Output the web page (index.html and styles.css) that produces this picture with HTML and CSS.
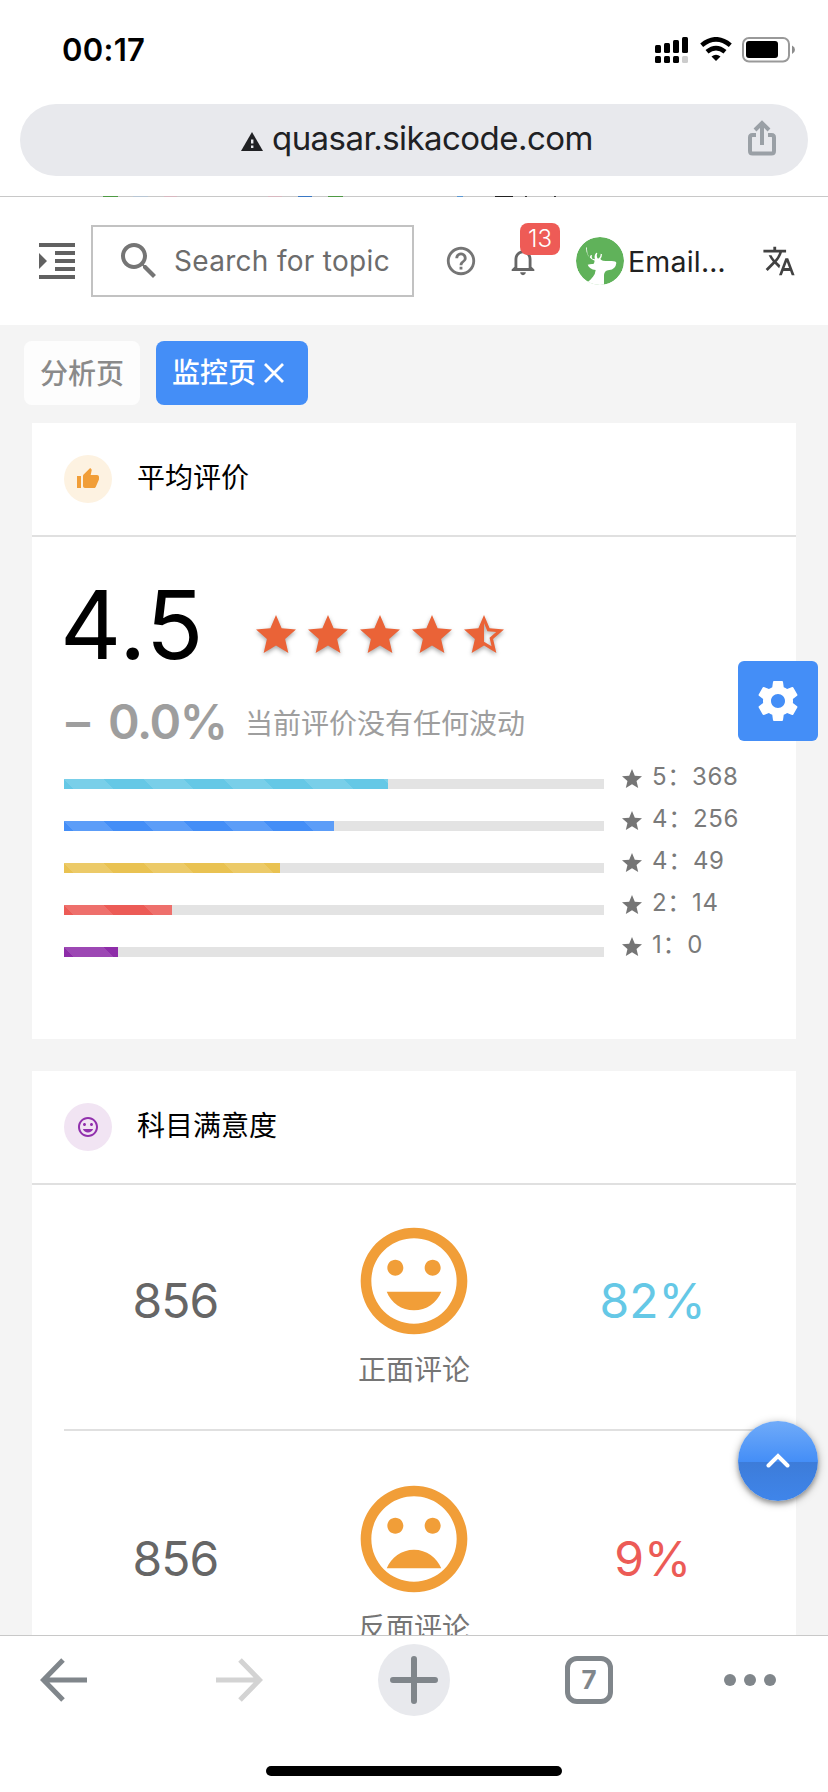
FILE: index.html
```html
<!DOCTYPE html>
<html lang="zh-CN">
<head>
<meta charset="utf-8">
<title>监控页</title>
<link rel="stylesheet" href="styles.css">
</head>
<body>
<svg class="sprite" aria-hidden="true">
  <symbol id="star" viewBox="0 0 24 24"><path d="M12 17.27L18.18 21l-1.64-7.03L22 9.24l-7.19-.61L12 2 9.19 8.63 2 9.24l5.46 4.73L5.82 21z"/></symbol>
  <symbol id="star-half" viewBox="0 0 24 24"><path d="M22 9.24l-7.19-.62L12 2 9.19 8.63 2 9.24l5.46 4.73L5.82 21 12 17.27 18.18 21l-1.63-7.03L22 9.24zM12 15.4V6.1l1.71 4.04 4.38.38-3.32 2.88 1 4.28L12 15.4z"/></symbol>
  <symbol id="mood" viewBox="0 0 24 24"><path d="M11.99 2C6.47 2 2 6.48 2 12s4.47 10 9.99 10C17.52 22 22 17.52 22 12S17.52 2 11.99 2zM12 20c-4.42 0-8-3.58-8-8s3.58-8 8-8 8 3.58 8 8-3.58 8-8 8zm3.5-9c.83 0 1.5-.67 1.5-1.5S16.33 8 15.5 8 14 8.67 14 9.5s.67 1.5 1.5 1.5zm-7 0c.83 0 1.5-.67 1.5-1.5S9.33 8 8.5 8 7 8.67 7 9.5 7.67 11 8.5 11zm3.5 6.5c2.33 0 4.31-1.46 5.11-3.5H6.89c.8 2.04 2.78 3.5 5.11 3.5z"/></symbol>
  <symbol id="mood-bad" viewBox="0 0 24 24"><path d="M11.99 2C6.47 2 2 6.48 2 12s4.47 10 9.99 10C17.52 22 22 17.52 22 12S17.52 2 11.99 2zM12 20c-4.42 0-8-3.58-8-8s3.58-8 8-8 8 3.58 8 8-3.58 8-8 8zm3.5-9c.83 0 1.5-.67 1.5-1.5S16.33 8 15.5 8 14 8.67 14 9.5s.67 1.5 1.5 1.5zm-7 0c.83 0 1.5-.67 1.5-1.5S9.33 8 8.5 8 7 8.67 7 9.5 7.67 11 8.5 11zm3.5 3c-2.33 0-4.31 1.46-5.11 3.5h10.22c-.8-2.04-2.78-3.5-5.11-3.5z"/></symbol>
</svg>

<div class="status">
  <span class="clock">00:17</span>
  <div class="indicators">
    <svg width="34" height="26" viewBox="0 0 34 26"><rect x="0" y="8" width="6" height="8" rx="1.5"/><rect x="9" y="6" width="6" height="10" rx="1.5"/><rect x="18" y="3" width="6" height="13" rx="1.5"/><rect x="27" y="0" width="6" height="16" rx="1.5"/><rect x="0" y="19" width="6" height="7" rx="1.5"/><rect x="9" y="19" width="6" height="7" rx="1.5"/><rect x="18" y="19" width="6" height="7" rx="1.5"/><rect x="27" y="19" width="6" height="7" rx="1.5" fill="#ccc"/></svg>
    <svg class="wifi" width="32" height="25" viewBox="0 0 32 25"><path d="M1.700 8.200Q16-3.600 30.300 8.200" fill="none" stroke="#000" stroke-width="4.600"/><path d="M7 14.800Q16 7.400 25 14.800" fill="none" stroke="#000" stroke-width="4.600"/><path d="M11.500 19.500Q16 15.800 20.500 19.500L16 24z"/></svg>
    <svg class="battery" width="54" height="26" viewBox="0 0 54 26"><rect x="1" y="1" width="46" height="23.500" rx="6" fill="none" stroke="#999" stroke-width="2"/><rect x="4" y="4" width="32" height="17" rx="3"/><path d="M50 8.500q3 1.500 3 4.200t-3 4.200z" fill="#8c8c8c"/></svg>
  </div>
</div>

<div class="address">
  <div class="pill">
    <svg width="22" height="19" viewBox="0 0 22 19"><path fill="#202124" d="M11 0l11 19H0z"/><path fill="#e8e9ed" d="M10 7.500h2.400v4H10zM10 13.500h2.400v2.400H10z"/></svg>
    <span class="url">quasar.sikacode.com</span>
    <svg class="share" width="28" height="36" viewBox="0 0 28 36" fill="none" stroke="#9aa0a6" stroke-width="4"><path d="M8 15H4.500Q2 15 2 17.500V31q0 2.500 2.500 2.500h19Q26 33.500 26 31V17.500Q26 15 23.500 15H20M14 25V3M7 10l7-7 7 7"/></svg>
  </div>
</div>
<div class="edge"></div>

<main class="page">
  <header class="topbar">
    <svg class="menu" viewBox="0 0 24 24"><path d="M3 21h18v-2H3v2zM3 8v8l4-4-4-4zm8 9h10v-2H11v2zM3 3v2h18V3H3zm8 6h10V7H11v2zm0 4h10v-2H11v2z"/></svg>
    <div class="search">
      <svg viewBox="0 0 24 24"><path d="M15.500 14h-.790l-.280-.270C15.410 12.590 16 11.110 16 9.500 16 5.910 13.090 3 9.500 3S3 5.910 3 9.500 5.910 16 9.500 16c1.610 0 3.090-.590 4.230-1.570l.270.280v.790l5 4.990L20.490 19l-4.990-5zm-6 0C7.010 14 5 11.990 5 9.500S7.010 5 9.500 5 14 7.010 14 9.500 11.990 14 9.500 14z"/></svg>
      <span>Search for topic</span>
    </div>
    <svg class="help" viewBox="0 0 24 24"><path d="M11 18h2v-2h-2v2zm1-16C6.480 2 2 6.480 2 12s4.480 10 10 10 10-4.480 10-10S17.520 2 12 2zm0 18c-4.410 0-8-3.590-8-8s3.590-8 8-8 8 3.590 8 8-3.590 8-8 8zm0-14c-2.210 0-4 1.790-4 4h2c0-1.100.900-2 2-2s2 .900 2 2c0 2-3 1.750-3 5h2c0-2.250 3-2.500 3-5 0-2.210-1.790-4-4-4z"/></svg>
    <div class="bell">
      <svg viewBox="0 0 24 24"><path d="M12 22c1.100 0 2-.900 2-2h-4c0 1.100.890 2 2 2zm6-6v-5c0-3.070-1.640-5.640-4.500-6.320V4c0-.830-.670-1.500-1.500-1.500s-1.500.670-1.500 1.500v.680C7.630 5.360 6 7.920 6 11v5l-2 2v1h16v-1l-2-2zm-2 1H8v-6c0-2.480 1.510-4.500 4-4.500s4 2.020 4 4.500v6z"/></svg>
      <span class="badge">13</span>
    </div>
    <svg class="avatar" viewBox="0 0 144 144"><circle cx="72" cy="72" r="72" fill="#60b25a"/><path fill="#fff" d="M30 31q0 16 7 26 7 9 19 14-1 7-4 10-8-1-17 2 5 13 24 16-1 12-8 20-7 9-15 15v12h48v-32q1-12 12-14 14-2 19-8 5-5 6-14 0-6-14-6-14 1-26-1-6-1-8-5 5-6 5-14l-4-2q0 12-8 15-6-6-2-17l-3-1q-8 9-4 20l-8-2q-3-4-1-10l-3-1q-4 4-3 8-10-9-9-30z"/></svg>
    <span class="user">Email…</span>
    <svg class="translate" viewBox="0 0 24 24"><path d="M12.870 15.070l-2.540-2.510.030-.030c1.740-1.940 2.980-4.170 3.710-6.530H17V4h-7V2H8v2H1v1.990h11.170C11.500 7.920 10.440 9.750 9 11.350 8.070 10.320 7.300 9.190 6.690 8h-2c.730 1.630 1.730 3.170 2.980 4.560l-5.090 5.020L4 19l5-5 3.110 3.110.760-2.040zM18.500 10h-2L12 22h2l1.120-3h4.750L21 22h2l-4.500-12zm-2.620 7l1.620-4.330L19.120 17h-3.240z"/></svg>
  </header>

  <nav class="tabs">
    <div class="tab"><span>分析页</span></div>
    <div class="tab active"><span>监控页</span><svg width="20" height="20" viewBox="0 0 20 20" fill="none" stroke="#fff" stroke-width="2.800"><path d="M1 1l18 18M19 1L1 19"/></svg></div>
  </nav>

  <section class="card rating">
    <div class="card-head">
      <div class="dot orange"><svg viewBox="0 0 24 24"><path d="M1 21h4V9H1v12zm22-11c0-1.100-.900-2-2-2h-6.310l.950-4.570.030-.320c0-.410-.170-.790-.440-1.060L14.170 1 7.590 7.590C7.220 7.950 7 8.450 7 9v10c0 1.100.900 2 2 2h9c.830 0 1.540-.500 1.840-1.220l3.020-7.050c.090-.230.140-.470.140-.730v-2z"/></svg></div>
      <h2>平均评价</h2>
    </div>
    <div class="score">
      <span class="value">4.5</span>
      <div class="stars"><svg><use href="#star"/></svg><svg><use href="#star"/></svg><svg><use href="#star"/></svg><svg><use href="#star"/></svg><svg><use href="#star-half"/></svg></div>
    </div>
    <div class="trend"><span class="dash">–</span><span class="percent">0.0%</span><span class="note">当前评价没有任何波动</span></div>
    <div class="bars">
      <div class="bar-row"><div class="track"><div class="fill cyan" style="width:60%"></div></div><svg><use href="#star"/></svg><span>5：368</span></div>
      <div class="bar-row"><div class="track"><div class="fill blue" style="width:50%"></div></div><svg><use href="#star"/></svg><span>4：256</span></div>
      <div class="bar-row"><div class="track"><div class="fill yellow" style="width:40%"></div></div><svg><use href="#star"/></svg><span>4：49</span></div>
      <div class="bar-row"><div class="track"><div class="fill red" style="width:20%"></div></div><svg><use href="#star"/></svg><span>2：14</span></div>
      <div class="bar-row"><div class="track"><div class="fill purple" style="width:10%"></div></div><svg><use href="#star"/></svg><span>1：0</span></div>
    </div>
  </section>

  <section class="card">
    <div class="card-head">
      <div class="dot violet"><svg><use href="#mood"/></svg></div>
      <h2>科目满意度</h2>
    </div>
    <div class="mood-row">
      <span class="count">856</span>
      <div class="face"><svg><use href="#mood"/></svg><span>正面评论</span></div>
      <span class="good">82%</span>
    </div>
    <div class="rule"></div>
    <div class="mood-row">
      <span class="count">856</span>
      <div class="face"><svg><use href="#mood-bad"/></svg><span>反面评论</span></div>
      <span class="bad">9%</span>
    </div>
  </section>

  <div class="settings"><svg viewBox="0 0 24 24"><path d="M19.430 12.980c.040-.320.070-.640.070-.980s-.030-.660-.070-.980l2.110-1.650c.190-.150.240-.420.120-.640l-2-3.460c-.120-.220-.390-.300-.610-.220l-2.490 1c-.520-.400-1.080-.730-1.690-.980l-.380-2.650C14.460 2.180 14.250 2 14 2h-4c-.250 0-.460.180-.490.420l-.380 2.650c-.610.250-1.170.590-1.690.980l-2.490-1c-.230-.090-.490 0-.610.220l-2 3.460c-.130.220-.070.490.120.640l2.110 1.650c-.040.320-.070.650-.070.980s.030.660.070.980l-2.110 1.650c-.190.150-.240.420-.120.640l2 3.460c.120.220.390.300.610.220l2.490-1c.520.400 1.080.730 1.690.980l.380 2.650c.030.240.240.420.490.420h4c.250 0 .460-.180.490-.420l.380-2.650c.610-.250 1.170-.590 1.690-.980l2.490 1c.230.090.490 0 .610-.220l2-3.460c.120-.220.070-.490-.120-.640l-2.110-1.650zM12 15.500c-1.930 0-3.500-1.570-3.500-3.500s1.570-3.500 3.500-3.500 3.500 1.570 3.500 3.500-1.570 3.500-3.500 3.500z"/></svg></div>
  <div class="to-top"><svg width="24" height="16" viewBox="0 0 24 16" fill="none" stroke="#fff" stroke-width="4" stroke-linecap="round"><path d="M2.500 12.500L12 3l9.500 9.500"/></svg></div>
</main>

<footer class="toolbar">
  <svg class="back" width="48" height="44" viewBox="0 0 48 44" fill="none" stroke="#80868b" stroke-width="5"><path d="M47 22H4M23 2L3.500 22 23 42"/></svg>
  <svg class="forward" width="48" height="44" viewBox="0 0 48 44" fill="none" stroke="#d3d3d3" stroke-width="5"><path d="M1 22h43M25 2l19.500 20L25 42"/></svg>
  <div class="new-tab"><svg width="48" height="48" viewBox="0 0 48 48" stroke="#80868b" stroke-width="6" stroke-linecap="round"><path d="M24 3v42M3 24h42"/></svg></div>
  <div class="tab-count">7</div>
  <svg class="more" width="52" height="12" viewBox="0 0 52 12" fill="#80868b"><circle cx="6" cy="6" r="6"/><circle cx="26" cy="6" r="6"/><circle cx="46" cy="6" r="6"/></svg>
</footer>
<div class="home"></div>
</body>
</html>
```

FILE: styles.css
```css
* { box-sizing: border-box; }

body {
  margin: 0;
  width: 828px;
  height: 1792px;
  overflow: hidden;
  display: flex;
  flex-direction: column;
  background: #fff;
  color: #000;
  font-family: Inter, "Noto Sans CJK SC", sans-serif;
}

svg { display: block; flex: none; }
.sprite { display: none; }

/* Status bar */
.status {
  height: 104px;
  flex: none;
  display: flex;
  justify-content: space-between;
  padding: 30px 33px 0 62px;
}
.clock { font-size: 31px; font-weight: 600; line-height: 40px; letter-spacing: 0.3px; }
.indicators { display: flex; padding-top: 7px; }
.wifi { margin-left: 11px; }
.battery { margin-left: 10px; margin-right: -1px; }

/* Address bar */
.address { height: 92px; flex: none; padding: 0 20px; }
.pill {
  height: 72px;
  border-radius: 36px;
  background: #e8e9ed;
  display: flex;
  align-items: center;
  padding-left: 221px;
}
.pill > svg:first-child { margin-top: 2px; }
.url {
  margin-left: 9px;
  width: 332px;
  font-size: 33px;
  line-height: 40px;
  color: #202124;
  letter-spacing: -0.55px;
  margin-top: -4px;
  white-space: nowrap;
}
.share { margin-left: 144px; margin-top: -5px; }

/* One pixel of page content showing under the address bar */
.edge {
  height: 1px;
  flex: none;
  background: linear-gradient(90deg,
    #c8c8c8 103px, #4e9a44 103px, #4e9a44 118px, #c8c8c8 118px, #c8c8c8 133px,
    #b8c6d4 133px, #b8c6d4 148px, #c8c8c8 148px, #c8c8c8 164px, #d8b8c0 164px,
    #d8b8c0 177px, #c8c8c8 177px, #c8c8c8 268px, #d8b8c0 268px, #d8b8c0 282px,
    #c8c8c8 282px, #c8c8c8 298px, #3a78c4 298px, #3a78c4 312px, #c8c8c8 312px,
    #c8c8c8 328px, #4e9a44 328px, #4e9a44 343px, #c8c8c8 343px, #c8c8c8 457px,
    #5a98d4 457px, #5a98d4 463px, #c8c8c8 463px, #c8c8c8 495px, #222 495px,
    #222 513px, #c8c8c8 513px, #c8c8c8 525px, #333 525px, #333 527px,
    #c8c8c8 527px, #c8c8c8 554px, #333 554px, #333 556px, #c8c8c8 556px);
}

/* Web page */
.page {
  position: relative;
  height: 1438px;
  flex: none;
  overflow: hidden;
  background: #f4f4f4;
}
.topbar {
  height: 128px;
  background: #fff;
  display: flex;
  align-items: center;
  padding-left: 33px;
}
.menu { width: 48px; height: 48px; fill: #616161; }
.search {
  width: 323px;
  height: 72px;
  margin-left: 10px;
  border: 2px solid #c2c2c2;
  display: flex;
  align-items: center;
  padding-left: 22px;
}
.search svg { width: 48px; height: 48px; fill: #757575; }
.search span {
  margin-left: 11px;
  font-size: 28px;
  color: #6c6c6c;
  letter-spacing: 0.3px;
  white-space: nowrap;
}
.help { width: 34px; height: 34px; margin-left: 30px; fill: #757575; }
.bell { position: relative; margin-left: 28px; }
.bell svg { width: 34px; height: 34px; fill: #666; }
.badge {
  position: absolute;
  left: 14px;
  top: -21px;
  width: 40px;
  height: 32px;
  border-radius: 8px;
  background: #ee5b56;
  color: #fff;
  font-size: 24px;
  font-weight: 300;
  line-height: 32px;
  text-align: center;
}
.avatar { width: 48px; height: 48px; margin-left: 36px; border-radius: 50%; }
.user {
  margin-left: 4px;
  width: 134px;
  font-size: 28.5px;
  letter-spacing: 0.2px;
  color: #212121;
  white-space: nowrap;
}
.translate { width: 34px; height: 34px; fill: #424242; }

.tabs { display: flex; gap: 16px; padding: 16px 24px 18px; }
.tab {
  height: 64px;
  width: 116px;
  border-radius: 8px;
  background: #fdfdfd;
  color: #8a8a8a;
  font-size: 28px;
  font-weight: 500;
  line-height: 66px;
  padding-left: 16px;
}
.tab.active {
  display: flex;
  align-items: center;
  gap: 8px;
  width: 152px;
  background: #448ef7;
  color: #fff;
}

/* Cards */
.card { margin: 0 32px 32px; background: #fff; }
.rating { height: 616px; }
.card-head {
  height: 114px;
  border-bottom: 2px solid #e0e0e0;
  display: flex;
  align-items: center;
  padding-left: 32px;
}
.card-head h2 { margin: -2px 0 0 25px; font-size: 28px; line-height: 40px; font-weight: 400; }
.dot { width: 48px; height: 48px; border-radius: 50%; padding: 12px; }
.dot svg { width: 24px; height: 24px; }
.orange { background: #fdf2e1; fill: #f19e38; }
.violet { background: #f1e4f3; fill: #9130ad; }

.score { height: 140px; display: flex; padding-left: 28px; }
.value {
  width: 192px;
  font-size: 95px;
  line-height: 116px;
  padding-top: 30px;
  letter-spacing: 0.8px;
  white-space: nowrap;
}
.stars { display: flex; gap: 4px; padding-top: 74px; }
.stars svg { width: 48px; height: 48px; fill: #ea6337; filter: drop-shadow(0 2px 2px rgba(0, 0, 0, 0.35)); }

.trend {
  height: 86px;
  padding: 3px 0 0 34px;
  display: flex;
  align-items: center;
  color: #9e9e9e;
  white-space: nowrap;
}
.dash { width: 42px; font-size: 48px; font-weight: 600; }
.percent { width: 137px; font-size: 48px; font-weight: 600; letter-spacing: -1.4px; }
.note { font-size: 28px; font-weight: 400; }

.bars { padding-left: 32px; }
.bar-row { height: 42px; display: flex; }
.track { width: 540px; height: 10px; margin-top: 16px; background: #e3e3e3; }
.fill {
  height: 10px;
  background-image: linear-gradient(45deg, rgba(255, 255, 255, 0.13) 25%, transparent 25%, transparent 50%, rgba(255, 255, 255, 0.13) 50%, rgba(255, 255, 255, 0.13) 75%, transparent 75%);
  background-size: 80px 80px;
}
.cyan { background-color: #65c8e6; }
.blue { background-color: #448ef7; }
.yellow { background-color: #e9c252; }
.red { background-color: #ec5b56; }
.purple { background-color: #8e2da9; }
.bar-row svg { width: 24px; height: 24px; margin: 4px 0 0 16px; fill: #757575; }
.bar-row span {
  margin-left: 8px;
  font-size: 24px;
  line-height: 28px;
  letter-spacing: 0.7px;
  color: #7a7a7a;
}

.mood-row { height: 244px; display: grid; grid-template-columns: repeat(3, 1fr); padding: 32px 24px 0; }
.mood-row > span { font-size: 48px; line-height: 60px; padding-top: 54px; text-align: center; }
.mood-row > .count { color: #666; letter-spacing: -1px; }
.good { color: #65c8e6; }
.bad { color: #ec5b56; }
.face { display: flex; flex-direction: column; align-items: center; color: #757575; font-size: 28px; line-height: 42px; }
.face svg { width: 128px; height: 128px; fill: #f19e38; }
.face span { margin-top: 4px; }
.rule { height: 2px; margin: 0 0 12px 32px; background: #e0e0e0; }

/* Floating controls */
.settings, .to-top {
  position: absolute;
  right: 10px;
  width: 80px;
  height: 80px;
  display: flex;
  align-items: center;
  justify-content: center;
}
.settings { top: 464px; border-radius: 6px; background: #448ef7; }
.settings svg { width: 48px; height: 48px; fill: #fff; }
.to-top {
  top: 1224px;
  border-radius: 50%;
  background: linear-gradient(#70abf9, #448ef7 51%, #3d7cd9 51%, #3f85ea);
  box-shadow: 0 2px 8px rgba(0, 0, 0, 0.35), 0 3px 4px rgba(0, 0, 0, 0.2);
}

/* Browser toolbar */
.toolbar {
  height: 131px;
  flex: none;
  border-top: 1px solid #c8c8c8;
  display: flex;
  align-items: flex-start;
  padding: 8px 0 0 40px;
}
.back, .forward { margin-top: 14px; }
.forward { margin-left: 127px; }
.new-tab {
  width: 72px;
  height: 72px;
  margin-left: 115px;
  border-radius: 50%;
  background: #e8e9ed;
  padding: 12px;
}
.tab-count {
  width: 48px;
  height: 48px;
  margin: 12px 0 0 115px;
  border: 5px solid #80868b;
  border-radius: 12px;
  color: #80868b;
  font-size: 26px;
  font-weight: 700;
  line-height: 38px;
  text-align: center;
}
.more { margin: 30px 0 0 111px; }
.home { width: 296px; height: 10px; flex: none; margin-left: 266px; border-radius: 5px; background: #000; }
```
